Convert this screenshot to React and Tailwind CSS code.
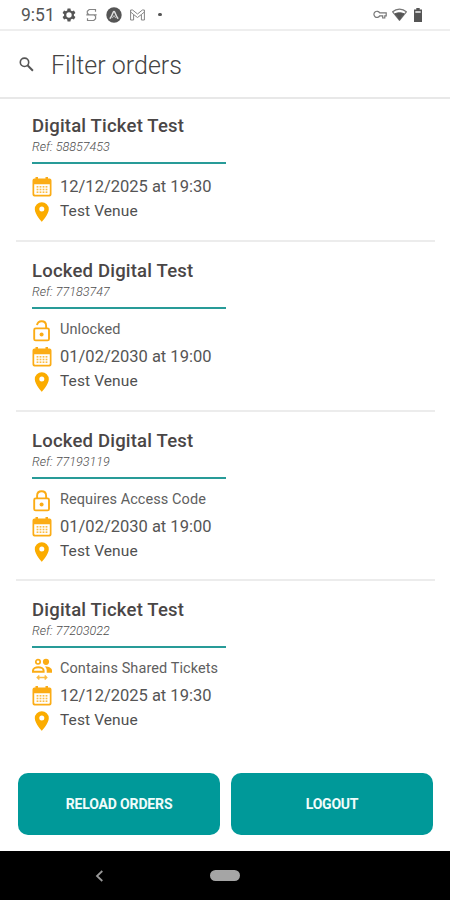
const orders = [
  { title: "Digital Ticket Test", reference: "58857453", date: "12/12/2025 at 19:30", size: "h-[143px] pt-[15px]" },
  { title: "Locked Digital Test", reference: "77183747", status: "Unlocked", kind: "open", date: "01/02/2030 at 19:00", size: "h-[170px] pt-[17px]" },
  { title: "Locked Digital Test", reference: "77193119", status: "Requires Access Code", kind: "locked", date: "01/02/2030 at 19:00", size: "h-[169px] pt-[17px]" },
  { title: "Digital Ticket Test", reference: "77203022", status: "Contains Shared Tickets", kind: "shared", date: "12/12/2025 at 19:30", size: "h-[169px] pt-[17px]", last: true },
];

function Calendar() {
  return (
    <svg width="20" height="20" viewBox="0 0 20 20" fill="#fbac15">
      <path fillRule="evenodd" d="M3.500 0h2.500v1.500h7.500V0H16v1.500h1.500a2 2 0 0 1 2 2v14a2 2 0 0 1-2 2h-15a2 2 0 0 1-2-2v-14a2 2 0 0 1 2-2h1zM2.200 7.300v9.400a1 1 0 0 0 1 1h13.600a1 1 0 0 0 1-1V7.300z" />
      {[4.6, 7.6, 10.6, 13.6].map((x) =>
        [9, 11.7, 14.4].map((y) => <rect key={x + "-" + y} x={x} y={y} width="1.800" height="1.600" opacity=".8" />)
      )}
    </svg>
  );
}

function Pin() {
  return (
    <svg width="20" height="20" viewBox="0 0 20 20" fill="#fbac00">
      <path fillRule="evenodd" d="M9.800 0.200a7 7 0 0 0-7 7c0 5 7 12.600 7 12.600s7-7.600 7-12.600a7 7 0 0 0-7-7zm0 4.400a2.500 2.500 0 1 1 0 5 2.500 2.500 0 0 1 0-5z" />
    </svg>
  );
}

function Lock({ open }) {
  return (
    <svg width="20" height="22" viewBox="0 0 20 22" fill="none" stroke="#fbac15" strokeWidth="1.9">
      <rect x="2.2" y="8.4" width="14.8" height="12" rx="1.5" />
      <path d={open ? "M5 5.200C5.400 2.900 7.200 1.300 9.600 1.300c2.700 0 4.500 1.900 4.500 4.500v2.600" : "M5.100 8.400V5.800c0-2.700 1.900-4.500 4.500-4.500s4.500 1.800 4.500 4.500v2.600"} />
      <circle cx="9.600" cy="14.400" r="2" fill="#fbac15" stroke="none" />
    </svg>
  );
}

function Shared() {
  return (
    <svg width="20" height="23" viewBox="0 0 20 23" fill="none" stroke="#fbac15" strokeWidth="1.7">
      <circle cx="6" cy="3.800" r="2.200" />
      <circle cx="14" cy="3.800" r="3.100" fill="#fbac15" stroke="none" />
      <path d="M1 13.800v-1.300c0-2 2.800-3.300 5.300-3.300s5.300 1.300 5.300 3.300v1.300z" strokeWidth="2" />
      <path d="M12.800 8.500c3.500-.2 7.200 1.400 7.200 3.900v2.400h-5.300v-2.400c0-1.700-.700-3-1.900-3.900z" fill="#fbac15" stroke="none" />
      <path d="M5 19.500h10M7.300 17.500l-2 2 2 2M12.700 17.500l2 2-2 2" strokeWidth="1.500" opacity=".8" />
    </svg>
  );
}

function StatusIcon({ kind }) {
  if (kind === "shared") return <Shared />;
  return <Lock open={kind === "open"} />;
}

function Order({ title, reference, status, kind, date, size, last }) {
  return (
    <article className={`mr-[15px] ml-4 px-4 ${size} ${last ? "" : "border-b-2 border-[#ececec]"}`}>
      <h2 className="h-6 text-[18.5px] leading-6 font-medium tracking-[0.2px] text-[#4a4646]">{title}</h2>
      <p className="h-4 pt-px text-[12.5px] leading-4 font-light tracking-[0.03px] italic text-[#4c4c4c]">Ref: {reference}</p>
      <div className="mt-2 h-[2px] w-[194px] bg-[#289b98]" />
      <div className={status ? "mt-2" : "mt-[10px]"}>
        {status && (
          <div className="flex h-[27px] items-center gap-2">
            <StatusIcon kind={kind} />
            <span className="-mt-px text-[14.5px] leading-6 tracking-[0.08px] whitespace-nowrap text-[#606060]">{status}</span>
          </div>
        )}
        <div className="flex h-[25px] items-center gap-2">
          <Calendar />
          <span className="text-[16.5px] leading-6 text-[#555]">{date}</span>
        </div>
        <div className="flex h-[25px] items-center gap-2">
          <Pin />
          <span className="-mt-0.5 text-[15.5px] leading-6 tracking-[0.1px] text-[#505050]">Test Venue</span>
        </div>
      </div>
    </article>
  );
}

function StatusBar() {
  return (
    <div className="flex h-[31px] items-center justify-between border-b-2 border-[#eee] pr-7 pl-[21px]">
      <div className="flex items-center">
        <span className="w-[41px] text-[17.5px] leading-6 text-[#555]">9:51</span>
        <svg width="14" height="14" viewBox="0 0 24 24" fill="#555">
          <path fillRule="evenodd" d="M9.500 1h5l.6 3.300 2.200 1.300 3.200-1.200 2.500 4.300-2.600 2.200v2.400l2.600 2.100-2.500 4.300-3.200-1.200-2.200 1.300-.6 3.200h-5l-.6-3.200-2.200-1.300-3.200 1.200L1 15.400l2.600-2.100v-2.400L1 8.700l2.500-4.300 3.200 1.200 2.200-1.300zM12 7.400a4.600 4.600 0 1 0 0 9.200 4.600 4.600 0 0 0 0-9.200z" />
        </svg>
        <svg className="ml-[10px]" width="11" height="14" viewBox="0 0 11 14" fill="none" stroke="#858585" strokeWidth="1.200">
          <path d="M9.500 3.700V1.500H3.200L1.300 3.300v2l1.600 1.500h5l1.700 1.600v2.300l-1.800 1.800H1.500v-2.200M.3 6.800h10.400" />
        </svg>
        <svg className="ml-[9px]" width="16" height="16" viewBox="0 0 16 16">
          <circle cx="8" cy="8" r="7.700" fill="#555" />
          <path d="M3.800 11.700C5.400 9.900 6.300 7.600 7.200 5.200c.4-1 1.200-1 1.600 0 .9 2.400 1.800 4.700 3.400 6.500" fill="none" stroke="#ddd" strokeWidth="1.500" />
          <path d="M6.200 11.200L8 8.500l1.800 2.700" fill="none" stroke="#bbb" strokeWidth="1" />
        </svg>
        <svg className="ml-2" width="15" height="12" viewBox="0 0 15 12" fill="none" stroke="#858585" strokeWidth="1">
          <path d="M.6 11V1h2l4.900 4 4.900-4h2v10h-3V5.500L7.500 8.500 3.600 5.500V11zM.6 3l3 2.500M14.400 3l-3 2.500" />
        </svg>
        <span className="ml-[13px] size-[3.500px] rounded-full bg-[#555]" />
      </div>
      <div className="flex items-center">
        <svg width="14" height="9" viewBox="0 0 14 9" fill="none" stroke="#777" strokeWidth="1.200">
          <path d="M6.700 2.800h6.500v3h-1.400V8H9.700V5.900h-3a3.100 3.100 0 1 1 0-3.100z" />
        </svg>
        <svg className="ml-[5px]" width="15" height="13" viewBox="0 0 15 13">
          <path d="M.7 3.800C4.500.2 10.500.2 14.300 3.800L7.500 12.300z" fill="none" stroke="#777" strokeWidth="1.200" />
          <path d="M3 5.800c2.700-1.400 6.300-1.400 9 0l-4.500 6z" fill="#555" stroke="#555" />
        </svg>
        <svg className="ml-[7px]" width="8" height="14" viewBox="0 0 8 14">
          <path d="M2.300 0h3.400v1.600H8V14H0V1.600h2.300z" fill="#555" />
          <path d="M1.300 3h5.400v2H1.300z" fill="#ccc" />
        </svg>
      </div>
    </div>
  );
}

export default function App() {
  return (
    <div className="flex h-[900px] w-[450px] flex-col overflow-hidden bg-white font-[Roboto,sans-serif]">
      <StatusBar />
      <div className="flex h-[68px] items-center border-b-2 border-[#e8e8e8] pl-[19px]">
        <svg width="15" height="15" viewBox="0 0 15 15" fill="none" stroke="#555" strokeWidth="1.600">
          <circle cx="5.500" cy="5.300" r="4.200" />
          <path d="M8.700 8.500l5.200 5.200" strokeWidth="2" />
        </svg>
        <span className="ml-[17px] pt-[3px] text-[25px] leading-8 font-light text-[#444]">Filter orders</span>
      </div>
      <main className="h-[674px]">
        {orders.map((order) => (
          <Order key={order.reference} {...order} />
        ))}
      </main>
      <div className="flex h-[78px] gap-[11px] pr-[17px] pl-[18px]">
        <button className="h-[62px] flex-1 rounded-[10px] bg-[#009999] text-[14px] font-bold tracking-[-0.15px] text-[#f0fcfb]">RELOAD ORDERS</button>
        <button className="h-[62px] flex-1 rounded-[10px] bg-[#009999] text-[14px] font-bold tracking-[-0.25px] text-[#f0fcfb]">LOGOUT</button>
      </div>
      <nav className="flex h-[49px] items-center bg-black pl-[95px]">
        <svg width="9" height="12" viewBox="0 0 9 12" fill="none" stroke="#999" strokeWidth="1.800">
          <path d="M7.300 1L2 6l5.300 5" />
        </svg>
        <span className="ml-[106px] h-[11px] w-[30px] rounded-full bg-[#a5a5a5]" />
      </nav>
    </div>
  );
}
